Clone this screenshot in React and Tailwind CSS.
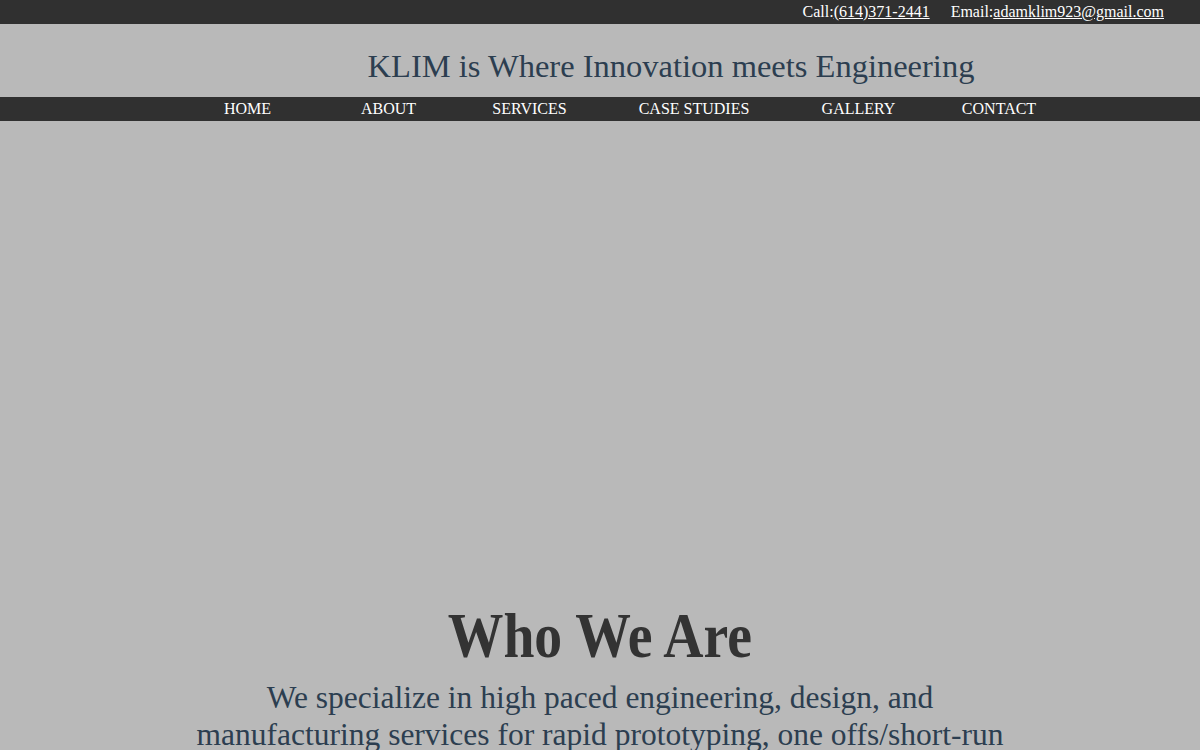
const navItems = [
  { label: 'HOME', w: 'w-[141px]' },
  { label: 'ABOUT', w: 'w-[141px]' },
  { label: 'SERVICES', w: 'w-[141px]' },
  { label: 'CASE STUDIES', w: 'w-[188px]' },
  { label: 'GALLERY', w: 'w-[141px]' },
  { label: 'CONTACT', w: 'w-[140px]' },
];

export default function App() {
  return (
    <div className="min-h-[750px] bg-[#b9b9b9] font-['Liberation_Serif',_'Times_New_Roman',serif] overflow-hidden">
      {/* Top contact bar */}
      <div className="h-6 bg-[#303030] flex items-center justify-end pr-[36px] text-white text-[16px] leading-6">
        <span>
          Call:<a href="#" className="underline">(614)371-2441</a>
        </span>
        <span className="ml-[21px]">
          Email:<a href="#" className="underline">adamklim923@gmail.com</a>
        </span>
      </div>

      {/* Title */}
      <div className="h-[73px] flex items-center justify-center pl-[142px] pt-[12px]">
        <h1 className="text-[32.5px] leading-none text-[#2c3e50]">KLIM is Where Innovation meets Engineering</h1>
      </div>

      {/* Nav */}
      <nav className="h-6 bg-[#303030] flex items-center">
        <ul className="flex ml-[177px]">
          {navItems.map(item => (
            <li key={item.label} className={`${item.w} text-center text-white text-[16px] leading-6`}>
              <a href="#">{item.label}</a>
            </li>
          ))}
        </ul>
      </nav>

      {/* Hero area (empty) */}
      <div className="h-[479px]" />

      {/* Who we are */}
      <section className="text-center">
        <h2 className="text-[64px] leading-[72px] font-bold text-[#333333]">
          <span className="inline-block scale-x-[0.87]">Who We Are</span>
        </h2>
        <p className="mx-auto w-[830px] text-[31.5px] leading-[37px] text-[#2c3e50] mt-[7px]">
          We specialize in high paced engineering, design, and manufacturing services for rapid prototyping, one offs/short-run production, and custom solutions.
        </p>
      </section>
    </div>
  );
}
